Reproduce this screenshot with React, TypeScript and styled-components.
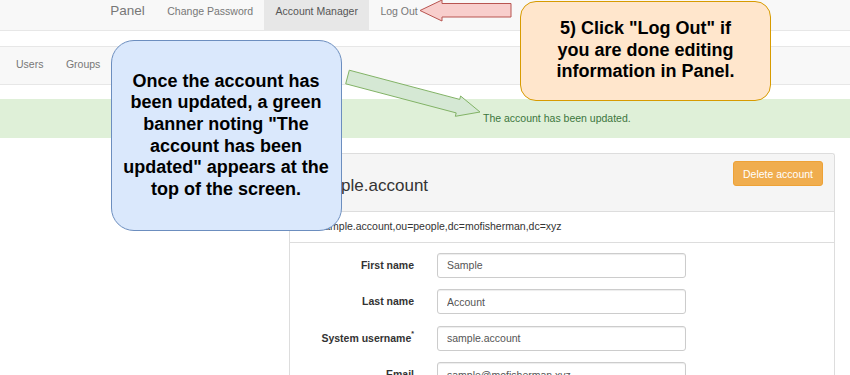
import React from "react";
import styled, { createGlobalStyle, css } from "styled-components";

const GlobalStyle = createGlobalStyle`
  html, body {
    margin: 0;
    padding: 0;
    width: 850px;
    height: 375px;
    overflow: hidden;
    background: #fff;
    font-family: "Liberation Sans", Arial, Helvetica, sans-serif;
    font-size: 10.5px;
    color: #333;
  }
  * { box-sizing: border-box; }
`;

const Page = styled.div`
  position: relative;
  width: 850px;
  height: 375px;
  overflow: hidden;
`;

const TopNav = styled.nav`
  display: flex;
  height: 31px;
  padding-left: 99px;
  background: #f8f8f8;
  border-bottom: 1px solid #e7e7e7;
`;

const Brand = styled.span`
  padding: 0 11.25px;
  font-size: 13.5px;
  line-height: 22px;
  color: #777;
`;

const NavItem = styled.span<{ $active?: boolean }>`
  height: 30px;
  padding: 0 11.25px;
  line-height: 22px;
  color: ${(p) => (p.$active ? "#555" : "#777")};
  background: ${(p) => (p.$active ? "#e7e7e7" : "transparent")};
`;

const SubNav = styled.nav`
  display: flex;
  margin-top: 15px;
  height: 39px;
  padding-left: 4.75px;
  background: #f8f8f8;
  border-top: 1px solid #e7e7e7;
  border-bottom: 1px solid #e7e7e7;
`;

const SubItem = styled.span`
  padding: 0 11.25px;
  line-height: 35px;
  color: #777;
`;

const Alert = styled.div`
  margin-top: 14px;
  height: 39px;
  padding-left: 483px;
  line-height: 38px;
  background: #dff0d8;
  color: #3c763d;
`;

const Panel = styled.section`
  margin: 15px 0 0 289px;
  width: 546px;
  height: 240px;
  border: 1px solid #ddd;
  border-bottom: none;
  border-radius: 3px 3px 0 0;
`;

const PanelHeading = styled.header`
  display: flex;
  justify-content: space-between;
  align-items: flex-start;
  height: 58px;
  padding: 7px 11px 0 19px;
  background: #f5f5f5;
  border-bottom: 1px solid #ddd;
  border-radius: 3px 3px 0 0;
`;

const Title = styled.h3`
  align-self: flex-end;
  margin: 0 0 15px;
  font-size: 17px;
  font-weight: normal;
  line-height: 20px;
  color: #333;
`;

const DeleteButton = styled.button`
  height: 25px;
  padding: 0 9px;
  font-family: "Liberation Sans", Arial, sans-serif;
  font-size: 10.5px;
  color: #fff;
  background: #f0ad4e;
  border: 1px solid #eea236;
  border-radius: 3px;
`;

const DnRow = styled.div`
  height: 31px;
  padding-left: 29px;
  line-height: 29px;
  border-bottom: 1px solid #ddd;
`;

const Form = styled.form`
  display: grid;
  row-gap: 11.5px;
  padding-top: 9.5px;
`;

const FieldRow = styled.div`
  display: grid;
  grid-template-columns: 124px 249px;
  column-gap: 23px;
  height: 25px;
`;

const Label = styled.label`
  text-align: right;
  font-weight: bold;
  line-height: 25px;
  color: #333;
`;

const Req = styled.sup`
  font-size: 7px;
  vertical-align: 6px;
  line-height: 0;
`;

const Input = styled.input`
  height: 25px;
  width: 100%;
  padding: 0 9px;
  font-family: "Liberation Sans", Arial, sans-serif;
  font-size: 10.5px;
  color: #555;
  background: #fff;
  border: 1px solid #ccc;
  border-radius: 3px;
  box-shadow: inset 0 1px 1px rgba(0, 0, 0, 0.075);
  outline: none;
`;

const Overlay = styled.svg`
  position: absolute;
  left: 0;
  top: 0;
  width: 850px;
  height: 375px;
  pointer-events: none;
`;

const palettes = {
  blue: css`
    background: #dae8fc;
    border: 1px solid #6c8ebf;
    border-radius: 23px;
  `,
  orange: css`
    background: #ffe6cc;
    border: 1px solid #d79b00;
    border-radius: 16px;
  `,
};

const Callout = styled.div<{
  $variant: "blue" | "orange";
  $x: number;
  $y: number;
  $w: number;
  $h: number;
}>`
  position: absolute;
  left: ${(p) => p.$x}px;
  top: ${(p) => p.$y}px;
  width: ${(p) => p.$w}px;
  height: ${(p) => p.$h}px;
  display: flex;
  align-items: center;
  justify-content: center;
  text-align: center;
  font-family: "Liberation Sans", Arial, sans-serif;
  font-weight: bold;
  font-size: 18px;
  line-height: 21.6px;
  color: #000;
  ${(p) => palettes[p.$variant]}
`;

const fields = [
  { label: "First name", value: "Sample" },
  { label: "Last name", value: "Account" },
  { label: "System username", value: "sample.account", req: true },
  { label: "Email", value: "sample@mofisherman.xyz" },
];

export default function App() {
  return (
    <Page>
      <GlobalStyle />
      <TopNav>
        <Brand>Panel</Brand>
        <NavItem>Change Password</NavItem>
        <NavItem $active>Account Manager</NavItem>
        <NavItem>Log Out</NavItem>
      </TopNav>
      <SubNav>
        <SubItem>Users</SubItem>
        <SubItem>Groups</SubItem>
      </SubNav>
      <Alert>The account has been updated.</Alert>
      <Panel>
        <PanelHeading>
          <Title>sample.account</Title>
          <DeleteButton type="button">Delete account</DeleteButton>
        </PanelHeading>
        <DnRow>sample.account,ou=people,dc=mofisherman,dc=xyz</DnRow>
        <Form>
          {fields.map((f) => (
            <FieldRow key={f.label}>
              <Label>
                {f.label}
                {f.req && <Req>*</Req>}
              </Label>
              <Input readOnly value={f.value} />
            </FieldRow>
          ))}
        </Form>
      </Panel>

      <Overlay viewBox="0 0 850 375">
        <polygon
          points="511,3.5 442,3.5 442,0 420,10.5 442,21 442,17 511,17"
          fill="#f8cecc"
          stroke="#b85450"
          strokeWidth="1"
        />
        <polygon
          points="349.3,70.2 459.7,99.4 460.6,96 480,112 455.3,116.3 456.2,112.9 345.7,83.8"
          fill="#d5e8d4"
          stroke="#82b366"
          strokeWidth="1"
        />
      </Overlay>

      <Callout $variant="blue" $x={110.5} $y={40} $w={231} $h={191}>
        <span>
          Once the account has
          <br />
          been updated, a green
          <br />
          banner noting "The
          <br />
          account has been
          <br />
          updated" appears at the
          <br />
          top of the screen.
        </span>
      </Callout>
      <Callout $variant="orange" $x={520} $y={0.5} $w={251} $h={100}>
        <span>
          5) Click "Log Out" if
          <br />
          you are done editing
          <br />
          information in Panel.
        </span>
      </Callout>
    </Page>
  );
}
